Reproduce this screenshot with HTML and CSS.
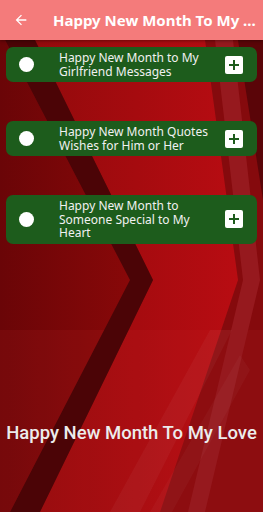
FILE: index.html
```html
<!DOCTYPE html>
<html lang="en">

<head>
    <meta charset="UTF-8">
    <meta name="viewport" content="width=device-width, initial-scale=1.0">
    <title>Happy New Month To My Love</title>
    <link rel="stylesheet" href="styles.css">
</head>

<body>
    <div class="screen">
        <!-- background artwork, sits under everything -->
        <svg class="backdrop" viewBox="0 0 263 512" preserveAspectRatio="none">
            <defs>
                <linearGradient id="mid" x1="0" y1="0" x2="1" y2="0">
                    <stop offset="0" stop-color="#930a0c" />
                    <stop offset="1" stop-color="#b80c12" />
                </linearGradient>
                <linearGradient id="left" x1="0" y1="0" x2="1" y2="0">
                    <stop offset="0" stop-color="#6a0507" />
                    <stop offset="1" stop-color="#880809" />
                </linearGradient>
            </defs>
            <rect x="0" y="0" width="263" height="512" fill="#850a0d" />
            <polygon points="0,40 5,40 130,280 10,512 0,512" fill="url(#left)" />
            <polygon points="35,40 205,40 238,280 160,512 40,512 153,280" fill="url(#mid)" />
            <rect x="0" y="330" width="263" height="182" fill="#d02a2a" opacity="0.12" />
            <polygon points="5,40 35,40 153,280 40,512 10,512 130,280" fill="#4b0406" />
            <polygon points="215,40 233,40 260,280 205,512 188,512 243,280" fill="#96191e" />
            <polygon points="238,40 263,40 263,200" fill="#5a0508" />
            <polygon points="110,512 140,512 232,330 210,330" fill="#ffffff" opacity="0.04" />
            <polygon points="150,512 172,512 250,370 240,355" fill="#ffffff" opacity="0.03" />
        </svg>

        <header class="appBar">
            <svg class="backArrow" viewBox="0 0 24 24" width="16" height="16">
                <path d="M20 11H7.830l5.59-5.59L12 4l-8 8 8 8 1.41-1.41L7.83 13H20v-2z" fill="#ffffff" />
            </svg>
            <h1 class="title">Happy New Month To My ...</h1>
        </header>

        <div class="list">
            <div class="card">
                <span class="dot"></span>
                <p class="cardText">Happy New Month to My Girlfriend Messages</p>
                <span class="plus">
                    <svg viewBox="0 0 18 18" width="18" height="18">
                        <path d="M9 4v10M4 9h10" stroke="#1d5c1c" stroke-width="2" />
                    </svg>
                </span>
            </div>
            <div class="card">
                <span class="dot"></span>
                <p class="cardText">Happy New Month Quotes Wishes for Him or Her</p>
                <span class="plus">
                    <svg viewBox="0 0 18 18" width="18" height="18">
                        <path d="M9 4v10M4 9h10" stroke="#1d5c1c" stroke-width="2" />
                    </svg>
                </span>
            </div>
            <div class="card">
                <span class="dot"></span>
                <p class="cardText">Happy New Month to Someone Special to My Heart</p>
                <span class="plus">
                    <svg viewBox="0 0 18 18" width="18" height="18">
                        <path d="M9 4v10M4 9h10" stroke="#1d5c1c" stroke-width="2" />
                    </svg>
                </span>
            </div>
        </div>

        <p class="footerText">Happy New Month To My Love</p>
    </div>
</body>

</html>
```

FILE: styles.css
```css
body {
    margin: 0;
    padding: 0;
    font-family: "Noto Sans", sans-serif;
}

.screen {
    position: relative;
    width: 263px;
    height: 512px;
    overflow: hidden;
    display: flex;
    flex-direction: column;
}

.backdrop {
    position: absolute;
    top: 0;
    left: 0;
    width: 263px;
    height: 512px;
}

.appBar {
    position: relative;
    height: 40px;
    background-color: #f47b7b;
    display: flex;
    align-items: center;
    box-shadow: 0 1px 3px rgba(0, 0, 0, 0.35);
}

.backArrow {
    margin-left: 13px;
    flex-shrink: 0;
}

.title {
    margin: 0 0 0 24px;
    color: #ffffff;
    font-size: 15px;
    font-weight: bold;
    white-space: nowrap;
}

.list {
    position: relative;
    display: flex;
    flex-direction: column;
    gap: 39px;
    padding: 7px 6px 0 6px;
}

.card {
    display: flex;
    align-items: center;
    background-color: #1d5c1c;
    border-radius: 7px;
    padding: 4px 0;
}

.dot {
    width: 15px;
    height: 15px;
    border-radius: 50%;
    background-color: #ffffff;
    margin-left: 13px;
    flex-shrink: 0;
}

.cardText {
    margin: 0 0 0 25px;
    width: 154px;
    color: #f1f1f1;
    font-size: 12px;
    line-height: 13.5px;
}

.plus {
    margin-left: auto;
    margin-right: 14px;
    width: 18px;
    height: 18px;
    background-color: #ffffff;
    border-radius: 2px;
    display: flex;
}

.footerText {
    position: relative;
    margin: 178px 0 0 0;
    text-align: center;
    white-space: nowrap;
    color: #ececec;
    font-family: Roboto, sans-serif;
    font-size: 18.5px;
    font-weight: 500;
}
```
